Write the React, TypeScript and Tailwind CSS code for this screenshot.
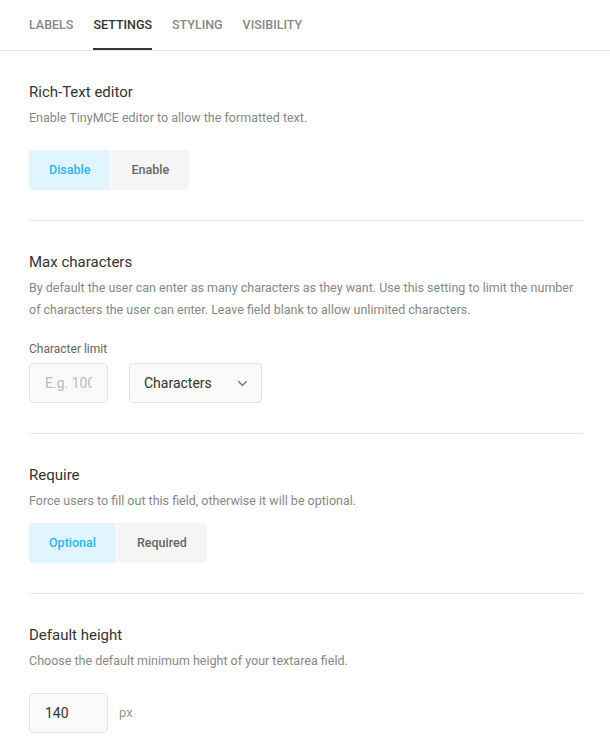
import { ChevronDown } from 'lucide-react'

const tabs = ['Labels', 'Settings', 'Styling', 'Visibility']

function Toggle({ options, active }: { options: string[]; active: number }) {
  return (
    <div className="flex gap-px">
      {options.map((opt, i) => (
        <button
          key={opt}
          className={
            (i === active ? 'bg-[#e1f5fe] text-[#29b6f6] ' : 'bg-[#f5f5f5] text-[#666] ') +
            (i === 0 ? 'rounded-l-[4px] ' : 'rounded-r-[4px] ') +
            'h-10 px-5 text-[12.5px] font-medium'
          }
        >
          {opt}
        </button>
      ))}
    </div>
  )
}

function Section({ title, desc, children, last }: { title: string; desc: string; children: React.ReactNode; last?: boolean }) {
  return (
    <div className={(last ? '' : 'border-b border-[#e5e5e5] ') + 'pt-[31px] pb-[30px]'}>
      <h3 className="text-[15px] leading-5 text-[#333]">{title}</h3>
      <p className="mt-[5px] text-[12.5px] leading-[22px] text-[#888]">{desc}</p>
      {children}
    </div>
  )
}

export default function App() {
  return (
    <div className="min-h-screen bg-white" style={{ fontFamily: 'Roboto, "Liberation Sans", sans-serif' }}>
      <div className="flex h-[51px] items-stretch gap-5 border-b border-[#e8e8e8] pl-[29px]">
        {tabs.map((t, i) => (
          <div
            key={t}
            className={
              (i === 1 ? 'border-[#333] text-[#333] ' : 'border-transparent text-[#888] ') +
              'flex items-center border-b-2 pt-[2px] text-[12.5px] font-medium uppercase'
            }
          >
            {t}
          </div>
        ))}
      </div>

      <div className="pl-[29px] pr-[27px]">
        <Section title="Rich-Text editor" desc="Enable TinyMCE editor to allow the formatted text.">
          <div className="mt-[21px]">
            <Toggle options={['Disable', 'Enable']} active={0} />
          </div>
        </Section>

        <Section
          title="Max characters"
          desc="By default the user can enter as many characters as they want. Use this setting to limit the number of characters the user can enter. Leave field blank to allow unlimited characters."
        >
          <label className="mt-5 block text-[12px] leading-4 text-[#666]">Character limit</label>
          <div className="mt-[6px] flex gap-[21px]">
            <input
              placeholder="E.g. 100"
              className="h-10 w-[79px] rounded-[4px] border border-[#e3e3e3] bg-[#fafafa] px-[15px] text-[14px] text-[#333] outline-none placeholder:text-[#bbb]"
            />
            <div className="flex h-10 w-[133px] items-center justify-between rounded-[4px] border border-[#e3e3e3] bg-[#fafafa] pl-[14px] pr-[11px] text-[14px] text-[#333]">
              <span>Characters</span>
              <ChevronDown className="h-[15px] w-[15px] text-[#888]" strokeWidth={2.5} />
            </div>
          </div>
        </Section>

        <Section title="Require" desc="Force users to fill out this field, otherwise it will be optional.">
          <div className="mt-[11px]">
            <Toggle options={['Optional', 'Required']} active={0} />
          </div>
        </Section>

        <Section title="Default height" desc="Choose the default minimum height of your textarea field." last>
          <div className="mt-[21px] flex items-center gap-[11px]">
            <input
              defaultValue="140"
              className="h-10 w-[79px] rounded-[4px] border border-[#e3e3e3] bg-[#fafafa] px-[15px] text-[14px] text-[#333] outline-none"
            />
            <span className="text-[13px] text-[#999]">px</span>
          </div>
        </Section>
      </div>
    </div>
  )
}
